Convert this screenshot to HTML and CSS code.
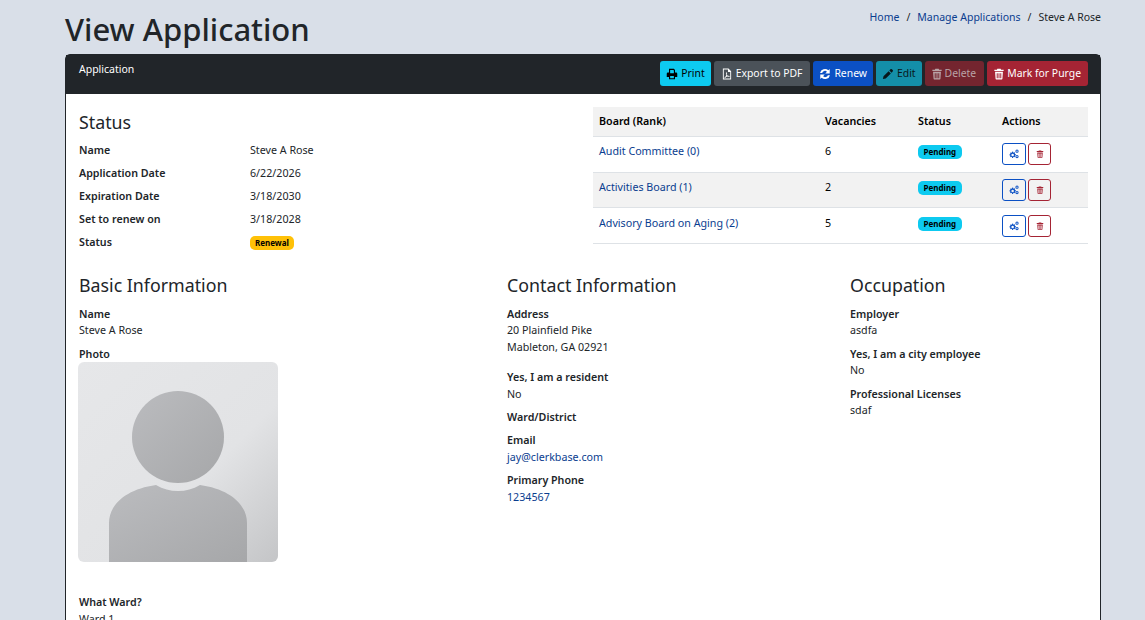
FILE: index.html
```html
<!DOCTYPE html>
<html lang="en">
<head>
    <meta charset="UTF-8">
    <meta name="viewport" content="width=device-width, initial-scale=1.0">
    <title>View Application</title>
    <link rel="stylesheet" href="styles.css">
</head>
<body>
    <svg class="sprite" width="0" height="0">
        <symbol id="i-print" viewBox="0 0 16 16"><path d="M4 1h6.500L12 2.500V6h1.500A1.500 1.500 0 0 1 15 7.500V12h-3v3H4v-3H1V7.500A1.500 1.500 0 0 1 2.500 6H4zm1.500 1.500V7h5V3.200L9.800 2.500zm0 8V13.500h5v-3z"/></symbol>
        <symbol id="i-pdf" viewBox="0 0 16 16"><path d="M2.500 .8h7.500l3.500 3.500V15.200h-11zm1.200 1.200v12h8.600V5.300H9.300V2zM7.400 5.800c.9 0 .8 1.500.4 2.900.4.800.9 1.400 1.500 1.800 1-.2 2.300-.1 2.300.7 0 .9-1.500.7-2.600 0-.8.200-1.600.5-2.300.8-.6 1.100-1.200 1.700-1.800 1.300-.5-.5.400-1.300 1.300-1.900.4-.8.700-1.600.9-2.500-.3-1-.6-3.100.300-3.100z"/></symbol>
        <symbol id="i-sync" viewBox="0 0 16 16"><path d="M14.300 1.200V7.200H8.300l2.300-2.300A3.900 3.900 0 0 0 4.200 6.500H1.400a6.700 6.700 0 0 1 11.100-3.500zM1.700 14.800V8.800h6l-2.300 2.300a3.900 3.900 0 0 0 6.400-1.600h2.800a6.700 6.700 0 0 1-11.100 3.500z"/></symbol>
        <symbol id="i-pencil" viewBox="0 0 16 16"><path d="M11.200 1.800a1.400 1.400 0 0 1 2 0l1 1a1.400 1.400 0 0 1 0 2l-1.400 1.400-3-3zM8.800 4.200l3 3L5 14l-3.800.8L2 11z"/></symbol>
        <symbol id="i-trash" viewBox="0 0 14 16"><path d="M4.700 .8h4.600l.7 1.400H13.500V3.800H.5V2.200h3.500zM1.500 5h11l-.7 9.700a1 1 0 0 1-1 1H3.200a1 1 0 0 1-1-1zm2.300 1.800v7h1.400v-7zm2.500 0v7h1.400v-7zm2.500 0v7h1.400v-7z"/></symbol>
        <symbol id="i-cogs" viewBox="0 0 16 16"><path fill-rule="evenodd" d="M5.500 4l1 .1.400 1.300.8.400 1.200-.6.900.9-.6 1.200.4.800 1.300.4v1.300l-1.300.4-.4.800.6 1.200-.9.900-1.200-.6-.8.400-.4 1.300H5l-.4-1.300-.8-.4-1.200.6-.9-.9.600-1.200-.4-.8L.6 10.100V8.800l1.300-.4.400-.8-.6-1.200.9-.9 1.200.6.800-.4zm.3 3.500a2 2 0 1 0 0 4 2 2 0 0 0 0-4z"/><path fill-rule="evenodd" d="M12.800.8a2.600 2.600 0 1 1 0 5.200 2.600 2.600 0 0 1 0-5.200zm0 1.500a1.100 1.100 0 1 0 0 2.200 1.100 1.100 0 0 0 0-2.200zM12.800 9.500a2.600 2.600 0 1 1 0 5.200 2.600 2.600 0 0 1 0-5.200zm0 1.500a1.100 1.100 0 1 0 0 2.200 1.100 1.100 0 0 0 0-2.200z"/></symbol>
    </svg>

    <div class="page">
        <header class="page-head">
            <h1>View Application</h1>
            <nav class="crumbs">
                <a href="#">Home</a><span>/</span><a href="#">Manage Applications</a><span>/</span><em>Steve A Rose</em>
            </nav>
        </header>

        <section class="card">
            <div class="card-head">
                <div class="card-title">Application</div>
                <div class="toolbar">
                    <a class="btn btn-info" href="#"><svg class="icon"><use href="#i-print"/></svg>Print</a>
                    <a class="btn btn-grey" href="#"><svg class="icon"><use href="#i-pdf"/></svg>Export to PDF</a>
                    <a class="btn btn-blue" href="#"><svg class="icon"><use href="#i-sync"/></svg>Renew</a>
                    <a class="btn btn-edit" href="#"><svg class="icon"><use href="#i-pencil"/></svg>Edit</a>
                    <a class="btn btn-delete" href="#"><svg class="icon icon-trash"><use href="#i-trash"/></svg>Delete</a>
                    <a class="btn btn-red" href="#"><svg class="icon icon-trash"><use href="#i-trash"/></svg>Mark for Purge</a>
                </div>
            </div>

            <div class="card-body">
                <div class="top-row">
                    <div>
                        <h2>Status</h2>
                        <dl class="status-list">
                            <dt>Name</dt><dd>Steve A Rose</dd>
                            <dt>Application Date</dt><dd>6/22/2026</dd>
                            <dt>Expiration Date</dt><dd>3/18/2030</dd>
                            <dt>Set to renew on</dt><dd>3/18/2028</dd>
                            <dt>Status</dt><dd><span class="badge badge-yellow">Renewal</span></dd>
                        </dl>
                    </div>
                    <table class="boards">
                        <thead>
                            <tr><th>Board (Rank)</th><th>Vacancies</th><th>Status</th><th>Actions</th></tr>
                        </thead>
                        <tbody>
                            <tr>
                                <td><a href="#">Audit Committee (0)</a></td><td class="num">6</td>
                                <td><span class="badge badge-cyan">Pending</span></td>
                                <td><span class="actions"><a class="mini mini-blue" href="#"><svg class="icon-sm"><use href="#i-cogs"/></svg></a><a class="mini mini-red" href="#"><svg class="icon-sm"><use href="#i-trash"/></svg></a></span></td>
                            </tr>
                            <tr>
                                <td><a href="#">Activities Board (1)</a></td><td class="num">2</td>
                                <td><span class="badge badge-cyan">Pending</span></td>
                                <td><span class="actions"><a class="mini mini-blue" href="#"><svg class="icon-sm"><use href="#i-cogs"/></svg></a><a class="mini mini-red" href="#"><svg class="icon-sm"><use href="#i-trash"/></svg></a></span></td>
                            </tr>
                            <tr>
                                <td><a href="#">Advisory Board on Aging (2)</a></td><td class="num">5</td>
                                <td><span class="badge badge-cyan">Pending</span></td>
                                <td><span class="actions"><a class="mini mini-blue" href="#"><svg class="icon-sm"><use href="#i-cogs"/></svg></a><a class="mini mini-red" href="#"><svg class="icon-sm"><use href="#i-trash"/></svg></a></span></td>
                            </tr>
                        </tbody>
                    </table>
                </div>

                <div class="info-row">
                    <div>
                        <h2>Basic Information</h2>
                        <div class="field"><b>Name</b><span>Steve A Rose</span></div>
                        <div class="field"><b>Photo</b>
                            <svg class="photo" viewBox="0 0 200 200">
                                <defs>
                                    <linearGradient id="photo-bg" x1="0" y1="0" x2="1" y2="1">
                                        <stop offset="0" stop-color="#e6e7e9"/>
                                        <stop offset=".6" stop-color="#e2e3e5"/>
                                        <stop offset="1" stop-color="#c4c5c7"/>
                                    </linearGradient>
                                    <linearGradient id="photo-fg" x1="0" y1="0" x2="1" y2="1">
                                        <stop offset="0" stop-color="#bbbcbf"/>
                                        <stop offset="1" stop-color="#a6a7a9"/>
                                    </linearGradient>
                                </defs>
                                <rect width="200" height="200" fill="url(#photo-bg)"/>
                                <circle cx="100" cy="75" r="46" fill="url(#photo-fg)"/>
                                <path d="M31 200v-39c0-19 18-34 47-38 7 4 14 6 22 6s15-2 22-6c29 4 47 19 47 38v39z" fill="url(#photo-fg)"/>
                            </svg>
                        </div>
                    </div>
                    <div class="contact">
                        <h2>Contact Information</h2>
                        <div class="field"><b>Address</b><span class="address">20 Plainfield Pike<br>Mableton, GA 02921</span></div>
                        <div class="field"><b>Yes, I am a resident</b><span>No</span></div>
                        <div class="field"><b>Ward/District</b></div>
                        <div class="field"><b>Email</b><a href="#">jay@clerkbase.com</a></div>
                        <div class="field"><b>Primary Phone</b><a href="#">1234567</a></div>
                    </div>
                    <div>
                        <h2>Occupation</h2>
                        <div class="field"><b>Employer</b><span>asdfa</span></div>
                        <div class="field"><b>Yes, I am a city employee</b><span>No</span></div>
                        <div class="field"><b>Professional Licenses</b><span>sdaf</span></div>
                    </div>
                </div>

                <div class="field field-ward"><b>What Ward?</b><span>Ward 1</span></div>
            </div>
        </section>
    </div>
</body>
</html>
```

FILE: styles.css
```css
*{
    box-sizing: border-box;
}
html, body{
    height: 100%;
    overflow: hidden;
}
body{
    margin: 0;
    background: #d9dfe8;
    color: #212529;
    font-family: "Noto Sans", "Open Sans", sans-serif;
    font-size: 10.7px;
    line-height: 16px;
}
a{
    color: #0a3d8f;
    text-decoration: none;
}
.sprite{
    display: block;
    height: 0;
}
.page{
    padding: 0 44px 0 65px;
}

.page-head{
    display: flex;
    justify-content: space-between;
    align-items: flex-start;
    height: 54px;
}
h1{
    margin: 8px 0 0;
    font-size: 31px;
    font-weight: 500;
    line-height: 42px;
}
.crumbs{
    display: flex;
    gap: 7px;
    padding-top: 9px;
    font-size: 10.5px;
}
.crumbs em{
    font-style: normal;
}

.card{
    background: #fff;
    border: 1px solid #212529;
    border-radius: 5px 5px 0 0;
}
.card-head{
    display: flex;
    justify-content: space-between;
    align-items: flex-start;
    height: 39px;
    padding: 6px 12px 0 13px;
    background: #212529;
}
.card-title{
    color: #fff;
    font-size: 10.5px;
}
.toolbar{
    display: flex;
    gap: 3px;
}
.btn{
    display: flex;
    align-items: center;
    gap: 3px;
    height: 25px;
    padding: 0 7px 2px;
    border-radius: 3px;
    color: #fff;
    font-size: 10.4px;
    white-space: nowrap;
}
.icon{
    width: 12px;
    height: 12px;
    margin-top: 2px;
    fill: currentColor;
}
.icon-trash{
    width: 10px;
}
.btn-info{
    padding: 0 6px 2px;
    background: #0dcaf0;
    color: #000;
}
.btn-grey{
    padding-right: 8px;
    background: #4b5259;
}
.btn-blue{
    padding: 0 6px 2px;
    background: #0b50c4;
}
.btn-edit{
    padding: 0 6px 2px;
    background: #148fa9;
    color: #08171b;
}
.btn-delete{
    padding-right: 8px;
    background: #74252f;
    color: #b9a3a6;
}
.btn-red{
    background: #a52434;
}

.card-body{
    padding: 13px 12px 0 13px;
}
h2{
    margin: 0;
    font-size: 17.8px;
    font-weight: 400;
    line-height: 30px;
}
.top-row{
    display: grid;
    grid-template-columns: 514px 495px;
    align-items: start;
}
.status-list{
    display: grid;
    grid-template-columns: 171px 1fr;
    grid-auto-rows: 23px;
    margin: 5px 0 0;
}
.status-list dt{
    font-weight: 600;
}
.status-list dd{
    margin: 0;
}

.badge{
    display: inline-block;
    margin-top: 1px;
    padding: 0 5.500px;
    border-radius: 5px;
    color: #000;
    font-size: 8px;
    font-weight: 700;
    line-height: 14px;
}
.badge-yellow{
    background: #ffc107;
    padding: 0 5px;
}
.badge-cyan{
    background: #0dcaf0;
}

.boards{
    width: 495px;
    border-collapse: collapse;
    table-layout: fixed;
}
.boards th{
    height: 29px;
    padding: 0 6px;
    background: #f2f2f2;
    border-bottom: 1px solid #dee2e6;
    color: #000;
    font-weight: 600;
    text-align: left;
}
.boards th:nth-child(1){
    width: 226px;
}
.boards th:nth-child(2){
    width: 93px;
}
.boards th:nth-child(3){
    width: 84px;
}
.boards td{
    height: 36px;
    padding: 6px 6px 0;
    border-bottom: 1px solid #dee2e6;
    vertical-align: top;
}
.boards tbody tr:nth-child(even) td{
    height: 35px;
    background: #f2f2f2;
}
.boards tbody tr:nth-child(3) td{
    padding-top: 7px;
}
.boards .num{
    color: #000;
}
.boards .badge{
    margin-top: 2px;
}
.actions{
    display: flex;
    gap: 2px;
}
.mini{
    display: flex;
    align-items: center;
    justify-content: center;
    width: 24px;
    height: 22px;
    border: 1px solid;
    border-radius: 3px;
}
.mini-blue{
    color: #0b50c4;
}
.mini-red{
    color: #a52434;
    width: 23px;
}
.icon-sm{
    width: 10px;
    height: 10px;
    fill: currentColor;
}
.mini-red .icon-sm{
    width: 8px;
    height: 8px;
}

.info-row{
    display: grid;
    grid-template-columns: 428px 343px 1fr;
    margin-top: 13px;
}
.field{
    margin-top: 8px;
}
h2 + .field{
    margin-top: 6px;
}
.field b{
    display: block;
    font-weight: 600;
    color: #212529;
}
.field span, .field a{
    display: block;
}
.contact .field{
    margin-top: 7px;
}
.contact h2 + .field{
    margin-top: 6px;
}
.contact .field span, .contact .field a{
    margin-top: 1px;
}
.contact .field .address{
    margin-top: 0;
    padding-bottom: 6px;
    line-height: 17px;
}
.photo{
    display: block;
    width: 200px;
    height: 200px;
    margin-left: -1px;
    border-radius: 6px;
}
.field-ward{
    margin-top: 32px;
}
.field-ward span{
    margin-top: 1px;
}
```
